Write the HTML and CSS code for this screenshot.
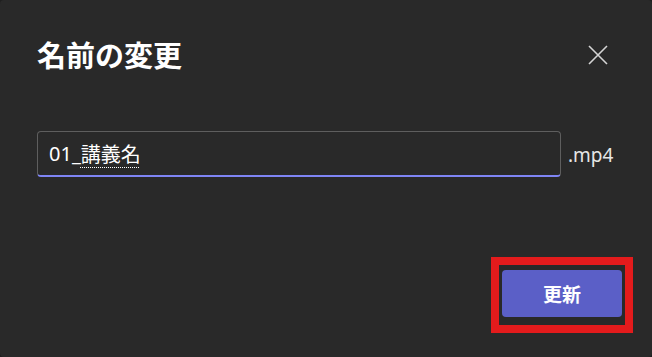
FILE: index.html
```html
<!DOCTYPE html>
<html lang="ja">
<head>
<meta charset="utf-8">
<title>名前の変更</title>
<link rel="stylesheet" href="styles.css">
</head>
<body>
<div class="dialog">
  <div class="header">
    <h1 class="title">名前の変更</h1>
    <button class="close" aria-label="閉じる">
      <svg width="20" height="20" viewBox="0 0 20 20"><path d="M1 1 L19 19 M19 1 L1 19" stroke="#d4d4d4" stroke-width="1.6" fill="none"/></svg>
    </button>
  </div>
  <div class="field-row">
    <div class="input"><span>01_</span><span class="ime">講義名</span></div>
    <span class="ext">.mp4</span>
  </div>
  <div class="footer">
    <div class="highlight">
      <button class="primary">更新</button>
    </div>
  </div>
</div>
</body>
</html>
```
FILE: styles.css
```css
* { box-sizing: border-box; }
html, body { margin: 0; padding: 0; }
body {
  width: 652px;
  height: 357px;
  background: #1f1f1f;
  font-family: "Noto Sans", "Noto Sans CJK JP", sans-serif;
  overflow: hidden;
}
.dialog {
  width: 652px;
  height: 357px;
  background: #292929;
  border-radius: 4px;
  padding: 36px 19px 0 37px;
  display: flex;
  flex-direction: column;
}
.header {
  display: flex;
  align-items: center;
  justify-content: space-between;
  height: 36px;
  margin-right: 25px;
}
.title {
  margin: 0;
  font-family: "Noto Sans CJK JP", sans-serif;
  font-weight: 700;
  font-size: 29px;
  line-height: 36px;
  color: #ffffff;
}
.close {
  background: none;
  border: 0;
  padding: 0;
  width: 20px;
  height: 20px;
  margin-top: 2px;
  display: flex;
}
.field-row {
  display: flex;
  align-items: center;
  margin-top: 59px;
  gap: 7px;
}
.input {
  width: 524px;
  height: 46px;
  border: 1px solid #5e5e5e;
  border-bottom: 2px solid #7f85f5;
  border-radius: 4px;
  background: #292929;
  padding: 0 0 0 11px;
  display: flex;
  align-items: center;
  font-size: 20px;
  color: #ffffff;
  line-height: 1;
}
.ime {
  font-family: "Noto Sans CJK JP", sans-serif;
  text-decoration: underline dotted #ffffff;
  text-decoration-thickness: 1px;
  text-underline-offset: 5px;
}
.ext {
  font-size: 19px;
  color: #e6e6e6;
  margin-top: 2px;
}
.footer {
  display: flex;
  justify-content: flex-end;
  margin-top: 80px;
}
.highlight {
  border: 8px solid #e31b1c;
  padding: 5px 3px 8px 3px;
}
.primary {
  display: block;
  width: 120px;
  height: 47px;
  border: 0;
  border-radius: 4px;
  background: #5b5fc7;
  color: #ffffff;
  font-family: "Noto Sans CJK JP", sans-serif;
  font-weight: 700;
  font-size: 19px;
}
```
